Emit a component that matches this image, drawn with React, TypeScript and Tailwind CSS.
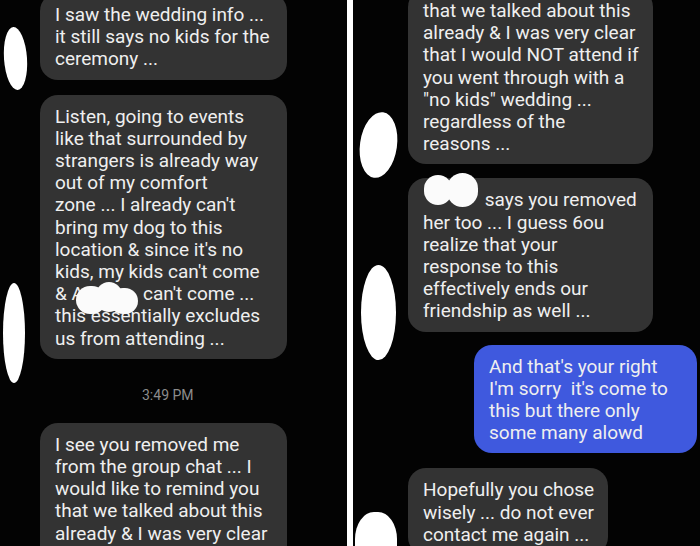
import React from 'react';

type BubbleProps = {
  lines: React.ReactNode[];
  className?: string;
};

const Bubble: React.FC<BubbleProps> = ({ lines, className = '' }) => (
  <div className={`rounded-[18px] pl-[15px] pt-[11px] pb-[9px] ${className}`}>
    {lines.map((l, i) => (
      <div key={i} className="whitespace-pre">
        {l}
      </div>
    ))}
  </div>
);

export default function App() {
  return (
    <div
      className="flex h-[546px] w-[700px] overflow-hidden bg-[#030303] text-[19px] leading-[22.2px] text-[#efefef]"
      style={{ fontFamily: 'Roboto, "Noto Sans", sans-serif' }}
    >
      {/* left screenshot */}
      <div className="relative w-[347px] shrink-0">
        <div className="flex flex-col items-start gap-[15px] pl-[40px] -mt-[7px]">
          <Bubble
            className="w-[247px] bg-[#333333]"
            lines={['I saw the wedding info ...', 'it still says no kids for the', 'ceremony ...']}
          />
          <Bubble
            className="w-[247px] bg-[#333333]"
            lines={[
              'Listen, going to events',
              'like that surrounded by',
              'strangers is already way',
              'out of my comfort',
              "zone ... I already can't",
              'bring my dog to this',
              "location & since it's no",
              "kids, my kids can't come",
              <>
                & A<span className="inline-block w-[59px]" />
                {"can't come ..."}
              </>,
              'this essentially excludes',
              'us from attending ...',
            ]}
          />
        </div>
        <p className="mt-[26px] mb-[18px] pl-[142px] text-[14px] leading-[20px] text-[#8c8c8c]">3:49 PM</p>
        <div className="pl-[40px]">
          <Bubble
            className="w-[247px] bg-[#333333]"
            lines={[
              'I see you removed me',
              'from the group chat ... I',
              'would like to remind you',
              'that we talked about this',
              'already & I was very clear',
              'that I would NOT attend if',
            ]}
          />
        </div>

        {/* redaction blobs */}
        <div className="absolute left-[4px] top-[27px] h-[63px] w-[23px] rounded-[50%] bg-white rotate-[-4deg]" />
        <div className="absolute left-[3px] top-[283px] h-[100px] w-[22px] rounded-[50%] bg-white" />
        <div className="absolute left-[76px] top-[286px] h-[28px] w-[30px] rounded-full bg-[#fbfbfb]" />
        <div className="absolute left-[96px] top-[282px] h-[30px] w-[26px] rounded-full bg-[#fbfbfb]" />
        <div className="absolute left-[110px] top-[288px] h-[26px] w-[28px] rounded-full bg-[#fbfbfb]" />
      </div>

      <div className="w-[6px] shrink-0 bg-white" />

      {/* right screenshot */}
      <div className="relative flex-1">
        <div className="flex flex-col items-start pl-[55px] -mt-[11px]">
          <Bubble
            className="w-[245px] bg-[#333333]"
            lines={[
              'that we talked about this',
              'already & I was very clear',
              'that I would NOT attend if',
              'you went through with a',
              '"no kids" wedding ...',
              'regardless of the',
              'reasons ...',
            ]}
          />
          <Bubble
            className="mt-[14px] w-[245px] bg-[#333333]"
            lines={[
              <>
                <span className="inline-block w-[57px]" /> says you removed
              </>,
              'her too ... I guess 6ou',
              'realize that your',
              'response to this',
              'effectively ends our',
              'friendship as well ...',
            ]}
          />
          <Bubble
            className="mt-[13px] ml-[66px] w-[223px] bg-[#3f59de]"
            lines={["And that's your right", "I'm sorry  it's come to", 'this but there only', 'some many alowd']}
          />
          <Bubble
            className="mt-[15px] w-[200px] bg-[#333333]"
            lines={['Hopefully you chose', 'wisely ... do not ever', 'contact me again ...', '']}
          />
        </div>

        {/* redaction blobs */}
        <div className="absolute left-[7px] top-[112px] h-[66px] w-[37px] rounded-[50%] bg-white rotate-[8deg]" />
        <div className="absolute left-[71px] top-[175px] h-[30px] w-[28px] rounded-full bg-[#fbfbfb]" />
        <div className="absolute left-[94px] top-[173px] h-[34px] w-[31px] rounded-full bg-[#fbfbfb]" />
        <div className="absolute left-[8px] top-[265px] h-[95px] w-[35px] rounded-[50%] bg-white" />
        <div className="absolute left-[2px] top-[512px] h-[60px] w-[42px] rounded-[45%] bg-white" />
      </div>
    </div>
  );
}
